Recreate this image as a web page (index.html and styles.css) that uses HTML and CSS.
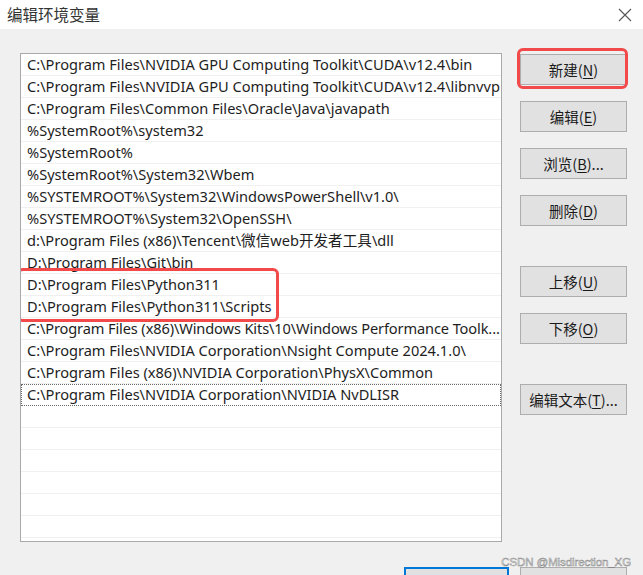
FILE: index.html
```html
<!DOCTYPE html>
<html lang="zh-CN">
<head>
<meta charset="utf-8">
<title>编辑环境变量</title>
<link rel="stylesheet" href="styles.css">
</head>
<body>
<div class="window">
  <div class="titlebar">
    <span class="title">编辑环境变量</span>
    <svg class="close" width="14" height="14" viewBox="0 0 14 14"><path d="M1 1L13 13M13 1L1 13" stroke="#555" stroke-width="1.1" fill="none"/></svg>
  </div>
  <div class="main">
    <div class="listbox">
      <div class="row">C:\Program Files\NVIDIA GPU Computing Toolkit\CUDA\v12.4\bin</div>
      <div class="row">C:\Program Files\NVIDIA GPU Computing Toolkit\CUDA\v12.4\libnvvp</div>
      <div class="row">C:\Program Files\Common Files\Oracle\Java\javapath</div>
      <div class="row">%SystemRoot%\system32</div>
      <div class="row">%SystemRoot%</div>
      <div class="row">%SystemRoot%\System32\Wbem</div>
      <div class="row">%SYSTEMROOT%\System32\WindowsPowerShell\v1.0\</div>
      <div class="row">%SYSTEMROOT%\System32\OpenSSH\</div>
      <div class="row">d:\Program Files (x86)\Tencent\微信web开发者工具\dll</div>
      <div class="row">D:\Program Files\Git\bin</div>
      <div class="highlight-group">
        <div class="row">D:\Program Files\Python311</div>
        <div class="row">D:\Program Files\Python311\Scripts</div>
        <div class="redbox list-redbox"></div>
      </div>
      <div class="row tight">C:\Program Files (x86)\Windows Kits\10\Windows Performance Toolk...</div>
      <div class="row">C:\Program Files\NVIDIA Corporation\Nsight Compute 2024.1.0\</div>
      <div class="row">C:\Program Files (x86)\NVIDIA Corporation\PhysX\Common</div>
      <div class="row focused">C:\Program Files\NVIDIA Corporation\NVIDIA NvDLISR</div>
      <div class="row"></div>
      <div class="row"></div>
      <div class="row"></div>
      <div class="row"></div>
      <div class="row"></div>
      <div class="row"></div>
      <div class="row"></div>
      <div class="row"></div>
      <div class="row"></div>
    </div>
    <div class="buttons">
      <div class="btn-wrap">
        <button class="btn">新建(<u>N</u>)</button>
        <div class="redbox btn-redbox"></div>
      </div>
      <button class="btn">编辑(<u>E</u>)</button>
      <button class="btn">浏览(<u>B</u>)...</button>
      <button class="btn">删除(<u>D</u>)</button>
      <button class="btn spaced">上移(<u>U</u>)</button>
      <button class="btn">下移(<u>O</u>)</button>
      <button class="btn spaced">编辑文本(<u>T</u>)...</button>
    </div>
  </div>
  <div class="footer">
    <button class="btn primary" aria-label="确定"></button>
    <button class="btn" aria-label="取消"></button>
  </div>
  <div class="watermark">CSDN @Misdirection_XG</div>
</div>
</body>
</html>
```
FILE: styles.css
```css
html, body {
  margin: 0;
  padding: 0;
  height: 100%;
  overflow: hidden;
}
body {
  background: #f0f0f0;
  font-family: "Noto Sans", "Noto Sans CJK SC", sans-serif;
  color: #1a1a1a;
}
.window {
  position: relative;
  width: 643px;
  height: 575px;
  overflow: hidden;
}
.titlebar {
  height: 29px;
  background: #ffffff;
  display: flex;
  align-items: center;
  justify-content: space-between;
  padding: 0 11px 0 7px;
  box-sizing: border-box;
}
.title {
  font-family: "Noto Sans CJK SC", sans-serif;
  font-size: 15.5px;
  color: #333333;
  margin-top: -1px;
}
.main {
  display: flex;
  margin-top: 24px;
  padding-left: 20px;
}
.listbox {
  width: 482px;
  height: 489px;
  box-sizing: border-box;
  border: 1px solid #a9a9a9;
  background: #ffffff;
  overflow: hidden;
}
.row {
  height: 22px;
  box-sizing: border-box;
  border-bottom: 1px solid #f0f0f0;
  padding-left: 6px;
  font-size: 14.6px;
  line-height: 21px;
  white-space: nowrap;
  overflow: hidden;
  color: #1e1e1e;
  font-family: "Noto Sans", "Noto Sans CJK SC", sans-serif;
}
.row.tight {
  letter-spacing: -0.12px;
}
.row.focused {
  border: 1px dotted #6a6a6a;
  padding-left: 5px;
  line-height: 19px;
}
.highlight-group {
  position: relative;
}
.redbox {
  position: absolute;
  border: 3px solid #f24a4a;
  border-radius: 6px;
  box-sizing: border-box;
  pointer-events: none;
}
.list-redbox {
  left: -4px;
  top: -6px;
  width: 262px;
  height: 54px;
}
.buttons {
  display: flex;
  flex-direction: column;
  gap: 16px;
  margin-left: 18px;
  padding-top: 1px;
}
.btn {
  width: 107px;
  height: 31px;
  background: #e1e1e1;
  border: 1px solid #adadad;
  font-family: "Noto Sans CJK SC", sans-serif;
  font-size: 14.5px;
  color: #1a1a1a;
  padding: 0;
  margin: 0;
}
.btn u {
  text-decoration-thickness: 1px;
  text-underline-offset: 2px;
}
.btn.spaced {
  margin-top: 24px;
}
.btn-wrap {
  position: relative;
  display: flex;
}
.btn-redbox {
  left: -3px;
  top: -6px;
  width: 111px;
  height: 41px;
}
.footer {
  display: flex;
  justify-content: flex-end;
  gap: 11px;
  padding-right: 16px;
  margin-top: 25px;
}
.btn.primary {
  border: 2px solid #0078d7;
  width: 105px;
}
.watermark {
  position: absolute;
  right: 12px;
  bottom: 7px;
  font-family: "Liberation Sans", sans-serif;
  font-size: 11.5px;
  color: #f4f4f4;
  -webkit-text-stroke: 0.5px #8a8a8a;
  letter-spacing: -0.1px;
}
```
